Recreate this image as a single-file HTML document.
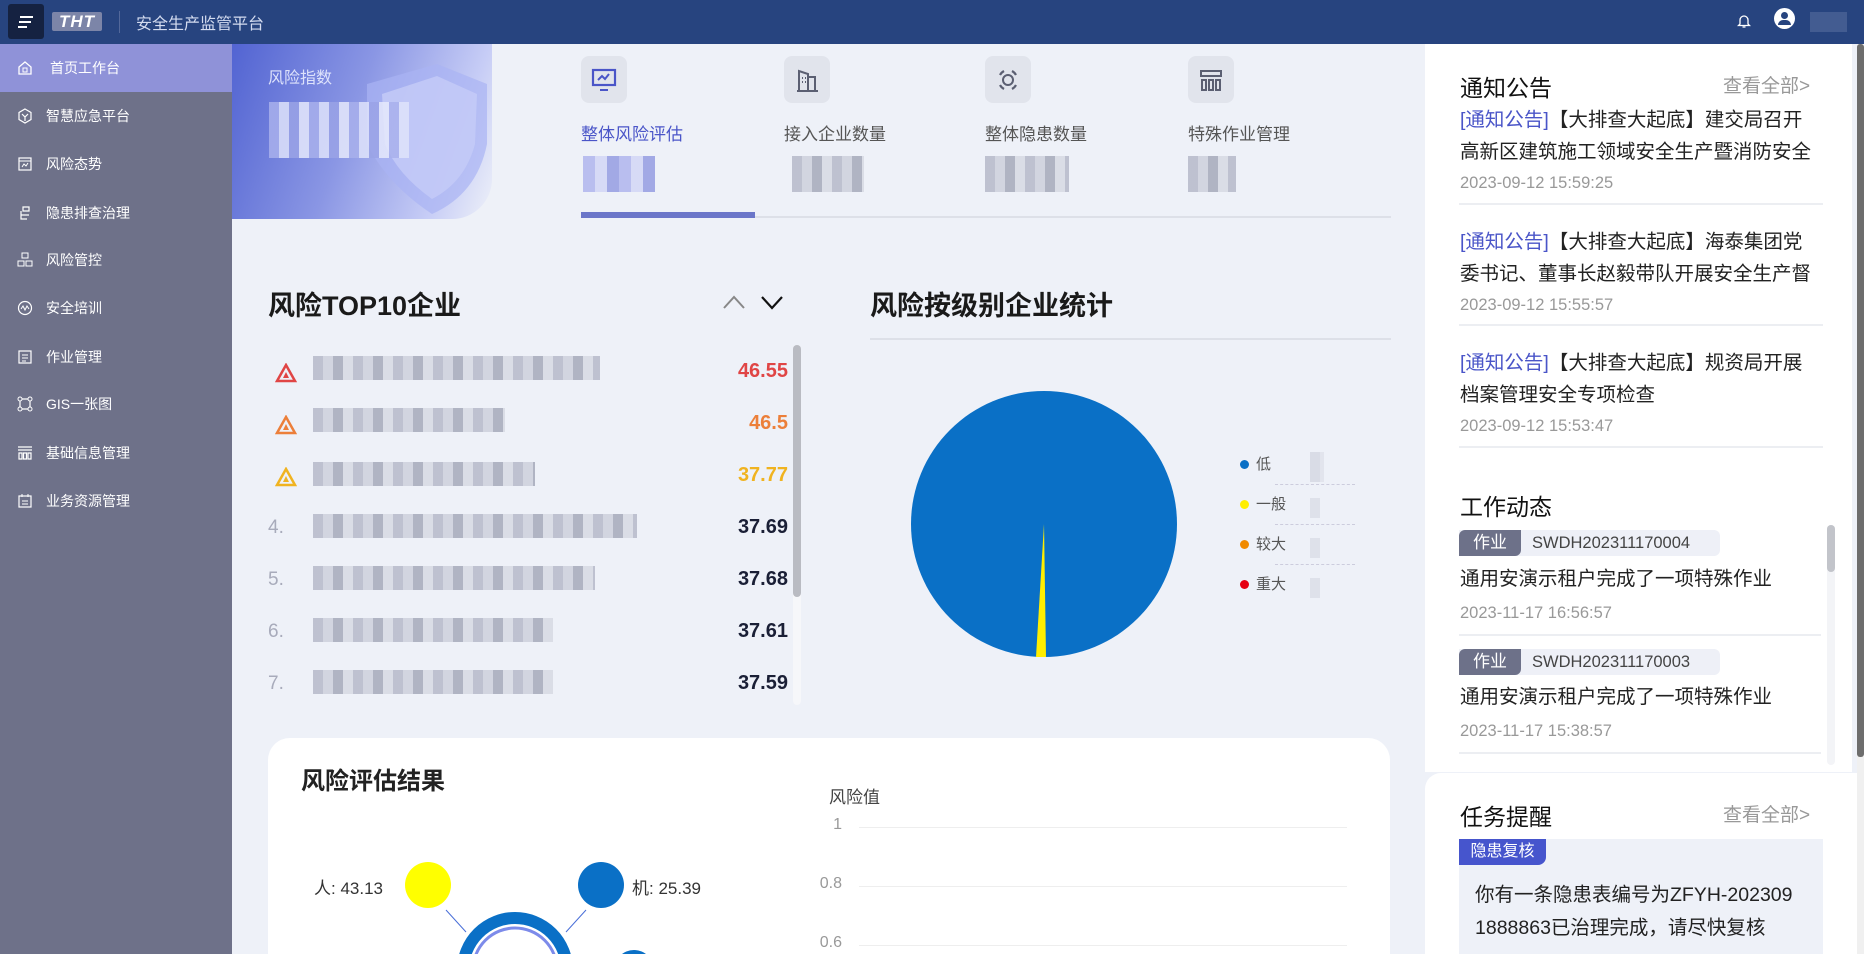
<!DOCTYPE html>
<html><head><meta charset="utf-8"><style>
*{margin:0;padding:0;box-sizing:border-box}
html,body{width:1864px;height:964px;overflow:hidden}
body{background:#eef1f8;font-family:"Liberation Sans","Noto Sans CJK SC",sans-serif;position:relative}
.a{position:absolute}
.hdr{left:0;top:0;width:1864px;height:44px;background:#27447f}
.side{left:0;top:44px;width:232px;height:910px;background:#6e7189}
.si{position:absolute;left:0;width:232px;height:48px;color:#fff;font-size:14px;line-height:48px;padding-left:46px}
.si svg{position:absolute;left:17px;top:16px}
.blur{position:absolute;background:repeating-linear-gradient(90deg,#b9bccb 0 10px,#cfd2dd 10px 20px,#a9adbd 20px 30px,#d8dbe4 30px 40px);opacity:.9}
.tab{position:absolute;top:56px;width:170px;height:120px}
.tab .ic{width:46px;height:47px;border-radius:8px;background:#e1e4ec;display:flex;align-items:center;justify-content:center}
.tab .lb{position:absolute;top:64px;font-size:17px;color:#555;white-space:nowrap}
.row{position:absolute;left:268px;width:520px;height:40px}
.row .v{position:absolute;right:0;top:8px;font-size:20px;font-weight:bold;color:#1a1f36}
.row .n{position:absolute;left:0;top:9px;font-size:19px;color:#a8abbb}
.nt{position:absolute;left:1460px;width:364px;font-size:19.5px;color:#222;line-height:32px}
.nt b{font-weight:normal;color:#4a55c8}
.dt{font-size:16.5px;color:#999;line-height:30px}
.sep{position:absolute;left:1459px;width:364px;height:2px;background:#eceef2}
</style></head><body>
<div class="a hdr"></div>
<div class="a" style="left:8px;top:4px;width:36px;height:35px;background:#152241;border-radius:3px"></div>
<svg class="a" style="left:17px;top:15px" width="18" height="14"><path d="M3 2h13M2 7h12M1 12h9" stroke="#fff" stroke-width="2"/></svg>
<div class="a" style="left:52px;top:12px;width:50px;height:19px;background:#7c85a8;border-radius:2px;color:#fff;font:italic bold 17px/19px 'Liberation Sans';text-align:center;letter-spacing:1px">THT</div>
<div class="a" style="left:119px;top:11px;width:1px;height:22px;background:#53689a"></div>
<div class="a" style="left:136px;top:10px;color:#d4dcf0;font-size:16px">安全生产监管平台</div>
<svg class="a" style="left:1737px;top:13px" width="14" height="16"><path d="M3 11V7a4 4 0 0 1 8 0v4l1.5 1.5h-11z M5.5 14h3" stroke="#fff" fill="none" stroke-width="1.3"/></svg>
<div class="a" style="left:1774px;top:8px;width:21px;height:21px;border-radius:50%;background:#fff"></div>
<div class="a" style="left:1781px;top:12px;width:7px;height:7px;border-radius:50%;background:#27447f"></div>
<div class="a" style="left:1778px;top:20px;width:13px;height:5px;border-radius:6px 6px 0 0;background:#27447f"></div>
<div class="a" style="left:1810px;top:12px;width:37px;height:20px;background:#4b6396;opacity:.8"></div>

<div class="a side"></div>
<div class="si" style="top:44px;background:#8f92d8;padding-left:50px">首页工作台<svg width="16" height="16"><path d="M2 7L8 2l6 5v7H2z" stroke="#fff" fill="none" stroke-width="1.3"/><rect x="6" y="8" width="4" height="4" stroke="#fff" fill="none"/></svg></div>
<div class="si" style="top:92px">智慧应急平台<svg width="16" height="16"><path d="M8 1l6 3.5v7L8 15l-6-3.5v-7z M5 6l3 3 3-3 M8 9v4" stroke="#fff" fill="none" stroke-width="1.2"/></svg></div>
<div class="si" style="top:140px">风险态势<svg width="16" height="16"><rect x="2" y="2" width="12" height="12" stroke="#fff" fill="none" stroke-width="1.2"/><path d="M2 5h12 M5 11l2-3 2 2 2-3" stroke="#fff" fill="none"/></svg></div>
<div class="si" style="top:189px">隐患排查治理<svg width="16" height="16"><path d="M6 2h6v4H6z M4 6v4h8 M4 10v4h6" stroke="#fff" fill="none" stroke-width="1.2"/></svg></div>
<div class="si" style="top:236px">风险管控<svg width="16" height="16"><rect x="5" y="1" width="6" height="5" stroke="#fff" fill="none"/><rect x="1" y="9" width="6" height="5" stroke="#fff" fill="none"/><rect x="9" y="9" width="6" height="5" stroke="#fff" fill="none"/></svg></div>
<div class="si" style="top:284px">安全培训<svg width="16" height="16"><circle cx="8" cy="8" r="6.5" stroke="#fff" fill="none" stroke-width="1.2"/><path d="M4 9l2-3 2 4 2-4 2 3" stroke="#fff" fill="none"/></svg></div>
<div class="si" style="top:333px">作业管理<svg width="16" height="16"><rect x="2" y="2" width="12" height="12" stroke="#fff" fill="none" stroke-width="1.2"/><path d="M5 6h6M5 9h6M5 12h4" stroke="#fff"/></svg></div>
<div class="si" style="top:380px">GIS一张图<svg width="16" height="16"><path d="M3 3h10v10H3z" stroke="#fff" fill="none" stroke-width="1.2"/><circle cx="3" cy="3" r="2" fill="#6e7189" stroke="#fff"/><circle cx="13" cy="3" r="2" fill="#6e7189" stroke="#fff"/><circle cx="3" cy="13" r="2" fill="#6e7189" stroke="#fff"/><circle cx="13" cy="13" r="2" fill="#6e7189" stroke="#fff"/></svg></div>
<div class="si" style="top:429px">基础信息管理<svg width="16" height="16"><path d="M1 2h14 M1 5h14 M2 8h3v6H2z M6.5 8h3v6h-3z M11 8h3v6h-3z" stroke="#fff" fill="none" stroke-width="1.2"/></svg></div>
<div class="si" style="top:477px">业务资源管理<svg width="16" height="16"><rect x="2" y="3" width="12" height="11" stroke="#fff" fill="none" stroke-width="1.2"/><path d="M5 1v3M11 1v3M5 8h6M5 11h6" stroke="#fff"/></svg></div>

<div class="a" style="left:232px;top:44px;width:260px;height:175px;background:linear-gradient(110deg,#5264d2 0%,#8a96e4 45%,#c7cdf6 80%,#eef1f8 100%);border-radius:0 0 40px 0;overflow:hidden">
<svg class="a" style="left:115px;top:20px" width="140" height="150"><path d="M20 20 L90 0 L140 20 L140 80 Q130 130 85 150 Q40 120 20 80z" fill="#aab3f3" opacity=".7"/><path d="M35 30 L90 12 L130 30 L128 80 Q118 118 85 135 Q50 110 38 80z" fill="#c6ccf8" opacity=".8"/></svg>
<div class="a" style="left:36px;top:20px;color:#dde2fb;font-size:16px">风险指数</div>
<div class="blur" style="left:37px;top:58px;width:140px;height:56px;background:repeating-linear-gradient(90deg,#a8b0ec 0 10px,#dfe3fb 10px 20px,#9aa3e6 20px 30px,#e6e9fc 30px 40px);opacity:.85"></div>
</div>

<div class="tab" style="left:581px"><div class="ic"><svg width="26" height="26"><rect x="2" y="3" width="22" height="15" stroke="#4a55c8" fill="none" stroke-width="2.2"/><path d="M7 13l4-4 3 3 4-5 M9 23h8" stroke="#4a55c8" fill="none" stroke-width="2"/></svg></div><div class="lb" style="color:#4a55c8;left:0">整体风险评估</div><div class="blur" style="left:2px;top:100px;width:72px;height:36px;background:repeating-linear-gradient(90deg,#b3b8ee 0 12px,#d4d7f6 12px 24px,#9aa1e3 24px 36px)"></div></div>
<div class="tab" style="left:784px"><div class="ic"><svg width="26" height="26"><path d="M5 24V4l9 3v17 M14 10h7v14 M3 24h21 M8 11h1M11 11h1M8 15h1M11 15h1" stroke="#5b5f72" fill="none" stroke-width="2"/></svg></div><div class="lb" style="left:0">接入企业数量</div><div class="blur" style="left:8px;top:100px;width:72px;height:36px"></div></div>
<div class="tab" style="left:985px"><div class="ic"><svg width="26" height="26"><circle cx="13" cy="13" r="5" stroke="#5b5f72" fill="none" stroke-width="2"/><path d="M5 8A10 10 0 0 1 9 4M17 4a10 10 0 0 1 4 4M21 18a10 10 0 0 1-4 4M9 22a10 10 0 0 1-4-4" stroke="#5b5f72" fill="none" stroke-width="2.2"/></svg></div><div class="lb" style="left:0">整体隐患数量</div><div class="blur" style="left:0;top:100px;width:84px;height:36px"></div></div>
<div class="tab" style="left:1188px"><div class="ic"><svg width="26" height="26"><path d="M3 4h20v5H3z M4 13h4v10H4z M11 13h4v10h-4z M18 13h4v10h-4z" stroke="#5b5f72" fill="none" stroke-width="2"/></svg></div><div class="lb" style="left:0">特殊作业管理</div><div class="blur" style="left:0;top:100px;width:48px;height:36px"></div></div>
<div class="a" style="left:581px;top:216px;width:810px;height:2px;background:#dde0e8"></div>
<div class="a" style="left:581px;top:212px;width:174px;height:6px;background:#6b76c9"></div>

<div class="a" style="left:268px;top:284px;font-size:27px;font-weight:bold;color:#1a1a1a">风险TOP10企业</div>
<svg class="a" style="left:722px;top:292px" width="70" height="20"><path d="M2 16l10-11 10 11" stroke="#888" fill="none" stroke-width="2"/><path d="M40 5l10 11 10-11" stroke="#111" fill="none" stroke-width="2.2"/></svg>
<div class="row" style="top:352px"><svg class="a" style="left:7px;top:11px" width="22" height="20"><path d="M11 2L20 18H2z" stroke="#e04545" fill="none" stroke-width="2.5"/><path d="M11 9l3 6H8z" fill="#e04545"/></svg><div class="blur" style="left:45px;top:4px;width:287px;height:24px"></div><div class="v" style="color:#e04545">46.55</div></div>
<div class="row" style="top:404px"><svg class="a" style="left:7px;top:11px" width="22" height="20"><path d="M11 2L20 18H2z" stroke="#ec7f3a" fill="none" stroke-width="2.5"/><path d="M11 9l3 6H8z" fill="#ec7f3a"/></svg><div class="blur" style="left:45px;top:4px;width:192px;height:24px"></div><div class="v" style="color:#ec7f3a">46.5</div></div>
<div class="row" style="top:456px"><svg class="a" style="left:7px;top:11px" width="22" height="20"><path d="M11 2L20 18H2z" stroke="#f0b320" fill="none" stroke-width="2.5"/><path d="M11 9l3 6H8z" fill="#f0b320"/></svg><div class="blur" style="left:45px;top:6px;width:222px;height:24px"></div><div class="v" style="color:#f0b320">37.77</div></div>
<div class="row" style="top:508px"><div class="n">4.</div><div class="blur" style="left:45px;top:6px;width:324px;height:24px"></div><div class="v">37.69</div></div>
<div class="row" style="top:560px"><div class="n">5.</div><div class="blur" style="left:45px;top:6px;width:282px;height:24px"></div><div class="v">37.68</div></div>
<div class="row" style="top:612px"><div class="n">6.</div><div class="blur" style="left:45px;top:6px;width:240px;height:24px"></div><div class="v">37.61</div></div>
<div class="row" style="top:664px"><div class="n">7.</div><div class="blur" style="left:45px;top:6px;width:240px;height:24px"></div><div class="v">37.59</div></div>
<div class="a" style="left:793px;top:345px;width:8px;height:360px;background:#f6f7fa;border-radius:4px"></div>
<div class="a" style="left:793px;top:345px;width:8px;height:252px;background:#b9bbc2;border-radius:4px"></div>

<div class="a" style="left:870px;top:284px;font-size:27px;font-weight:bold;color:#1a1a1a">风险按级别企业统计</div>
<div class="a" style="left:870px;top:338px;width:521px;height:2px;background:#dde0e8"></div>
<svg class="a" style="left:911px;top:391px" width="266" height="266"><circle cx="133" cy="133" r="133" fill="#0a70c6"/><path d="M133 133L125 266L135 266z" fill="#ffee00"/></svg>
<div class="a" style="left:1240px;top:445px;font-size:15px;color:#555;line-height:40px">
<div><span style="display:inline-block;width:9px;height:9px;border-radius:50%;background:#0a70c6;margin-right:7px"></span>低</div>
<div><span style="display:inline-block;width:9px;height:9px;border-radius:50%;background:#ffee00;margin-right:7px"></span>一般</div>
<div><span style="display:inline-block;width:9px;height:9px;border-radius:50%;background:#f08a00;margin-right:7px"></span>较大</div>
<div><span style="display:inline-block;width:9px;height:9px;border-radius:50%;background:#e60012;margin-right:7px"></span>重大</div></div>
<div class="a" style="left:1275px;top:484px;width:80px;border-top:1px dashed #ccd;"></div>
<div class="a" style="left:1275px;top:524px;width:80px;border-top:1px dashed #ccd;"></div>
<div class="a" style="left:1275px;top:564px;width:80px;border-top:1px dashed #ccd;"></div>
<div class="blur" style="left:1310px;top:452px;width:14px;height:30px;opacity:.4"></div>
<div class="blur" style="left:1310px;top:498px;width:10px;height:20px;opacity:.3"></div>
<div class="blur" style="left:1310px;top:538px;width:10px;height:20px;opacity:.3"></div>
<div class="blur" style="left:1310px;top:578px;width:10px;height:20px;opacity:.3"></div>

<div class="a" style="left:268px;top:738px;width:1122px;height:216px;background:#fff;border-radius:22px 22px 0 0;overflow:hidden">
<div class="a" style="left:33px;top:23px;font-size:24px;font-weight:bold;color:#222">风险评估结果</div>
<div class="a" style="left:561px;top:45px;font-size:17px;color:#444">风险值</div>
<div class="a" style="left:544px;top:78px;font-size:16px;color:#999;width:30px;text-align:right">1</div>
<div class="a" style="left:544px;top:137px;font-size:16px;color:#999;width:30px;text-align:right">0.8</div>
<div class="a" style="left:544px;top:196px;font-size:16px;color:#999;width:30px;text-align:right">0.6</div>
<div class="a" style="left:591px;top:89px;width:488px;height:1px;background:#eee"></div>
<div class="a" style="left:591px;top:148px;width:488px;height:1px;background:#eee"></div>
<div class="a" style="left:591px;top:207px;width:488px;height:1px;background:#eee"></div>
<div class="a" style="left:46px;top:136px;font-size:17px;color:#333">人: 43.13</div>
<div class="a" style="left:364px;top:136px;font-size:17px;color:#333">机: 25.39</div>
<svg class="a" style="left:0;top:0" width="560" height="230"><circle cx="160" cy="147" r="23" fill="#ffff00"/><circle cx="333" cy="147" r="23" fill="#0a70c6"/><path d="M178 172l20 22M318 172l-20 22" stroke="#4a6fd8"/><circle cx="247" cy="232" r="52" fill="none" stroke="#0a70c6" stroke-width="12"/><circle cx="247" cy="232" r="42" fill="none" stroke="#7d8bea" stroke-width="3"/><circle cx="366" cy="232" r="20" fill="#0a70c6"/></svg>
</div>

<div class="a" style="left:1425px;top:44px;width:427px;height:728px;background:#fff"></div>
<div class="a" style="left:1460px;top:69px;font-size:23px;color:#111">通知公告</div>
<div class="a" style="left:1723px;top:71px;font-size:19px;color:#999">查看全部&gt;</div>
<div class="nt" style="top:104px"><b>[通知公告]</b>【大排查大起底】建交局召开<br>高新区建筑施工领域安全生产暨消防安全<div class="dt">2023-09-12 15:59:25</div></div>
<div class="sep" style="top:203px"></div>
<div class="nt" style="top:226px"><b>[通知公告]</b>【大排查大起底】海泰集团党<br>委书记、董事长赵毅带队开展安全生产督<div class="dt">2023-09-12 15:55:57</div></div>
<div class="sep" style="top:324px"></div>
<div class="nt" style="top:347px"><b>[通知公告]</b>【大排查大起底】规资局开展<br>档案管理安全专项检查<div class="dt">2023-09-12 15:53:47</div></div>
<div class="sep" style="top:446px"></div>
<div class="a" style="left:1460px;top:488px;font-size:23px;color:#111">工作动态</div>
<div class="a" style="left:1459px;top:530px;width:261px;height:26px;background:#eef0f7;border-radius:0 6px 6px 0"></div>
<div class="a" style="left:1459px;top:530px;width:62px;height:26px;background:#6d7189;color:#fff;font-size:17px;line-height:26px;text-align:center;border-radius:6px 0 6px 0">作业</div>
<div class="a" style="left:1532px;top:530px;font-size:16.5px;line-height:26px;color:#444">SWDH202311170004</div>
<div class="nt" style="top:563px">通用安演示租户完成了一项特殊作业</div>
<div class="a dt" style="left:1460px;top:598px">2023-11-17 16:56:57</div>
<div class="sep" style="top:634px;width:362px"></div>
<div class="a" style="left:1459px;top:649px;width:261px;height:26px;background:#eef0f7;border-radius:0 6px 6px 0"></div>
<div class="a" style="left:1459px;top:649px;width:62px;height:26px;background:#6d7189;color:#fff;font-size:17px;line-height:26px;text-align:center;border-radius:6px 0 6px 0">作业</div>
<div class="a" style="left:1532px;top:649px;font-size:16.5px;line-height:26px;color:#444">SWDH202311170003</div>
<div class="nt" style="top:681px">通用安演示租户完成了一项特殊作业</div>
<div class="a dt" style="left:1460px;top:716px">2023-11-17 15:38:57</div>
<div class="sep" style="top:752px;width:362px"></div>
<div class="a" style="left:1827px;top:525px;width:8px;height:240px;background:#f3f4f7;border-radius:4px"></div>
<div class="a" style="left:1827px;top:525px;width:8px;height:47px;background:#c2c4ca;border-radius:4px"></div>

<div class="a" style="left:1425px;top:773px;width:439px;height:181px;background:#fff;border-radius:16px 0 0 0"></div>
<div class="a" style="left:1460px;top:798px;font-size:23px;color:#111">任务提醒</div>
<div class="a" style="left:1723px;top:800px;font-size:19px;color:#999">查看全部&gt;</div>
<div class="a" style="left:1459px;top:839px;width:364px;height:115px;background:#eef1f8"></div>
<div class="a" style="left:1459px;top:839px;width:87px;height:26px;background:#4655cd;color:#fff;font-size:16px;line-height:26px;text-align:center;border-radius:0 0 8px 0">隐患复核</div>
<div class="a" style="left:1475px;top:879px;font-size:19.5px;line-height:33px;color:#222">你有一条隐患表编号为ZFYH-202309<br>1888863已治理完成，请尽快复核</div>
<div class="a" style="left:0;top:954px;width:1864px;height:10px;background:#fff"></div>
<div class="a" style="left:1857px;top:44px;width:7px;height:910px;background:#f0f0f0"></div>
<div class="a" style="left:1857px;top:44px;width:7px;height:713px;background:#6d6d6d;border-radius:3px"></div>
</body></html>
